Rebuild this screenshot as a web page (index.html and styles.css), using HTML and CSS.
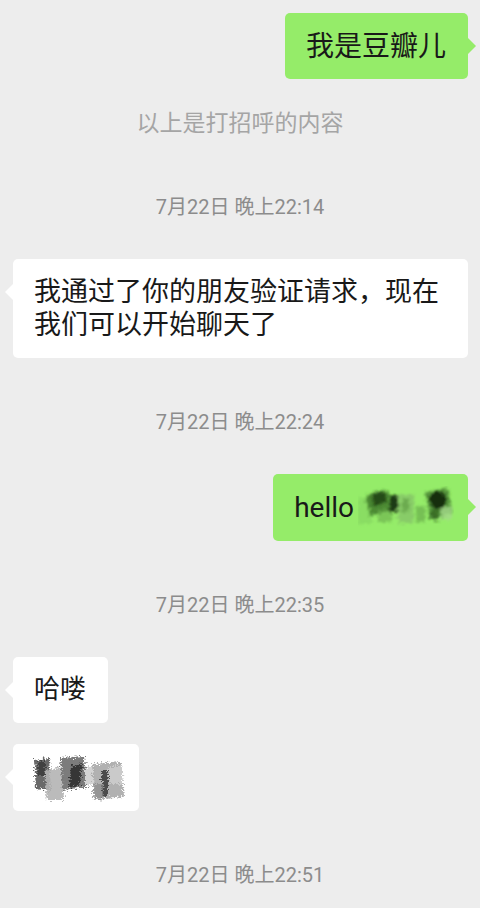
FILE: index.html
```html
<!DOCTYPE html>
<html lang="zh-CN">

<head>
    <meta charset="UTF-8">
    <meta name="viewport" content="width=device-width, initial-scale=1.0">
    <title>聊天</title>
    <link rel="stylesheet" href="styles.css">
</head>

<body>
    <div class="chat">

        <div class="row mine">
            <div class="bubble">我是豆瓣儿</div>
        </div>

        <p class="notice">以上是打招呼的内容</p>

        <p class="time">7月22日 晚上22:14</p>

        <div class="row">
            <div class="bubble wide">我通过了你的朋友验证请求，现在我们可以开始聊天了</div>
        </div>

        <p class="time">7月22日 晚上22:24</p>

        <div class="row mine">
            <div class="bubble scribbled">hello<svg class="scribble" width="96" height="46" viewBox="0 0 96 46">
                    <defs>
                        <filter id="roughGreen" x="-20%" y="-20%" width="140%" height="140%">
                            <feTurbulence type="fractalNoise" baseFrequency="0.5 1.4" numOctaves="3" seed="3" result="noise" />
                            <feDisplacementMap in="SourceGraphic" in2="noise" scale="9" xChannelSelector="R" yChannelSelector="G" />
                            <feGaussianBlur stdDeviation="0.8" />
                        </filter>
                    </defs>
                    <g filter="url(#roughGreen)">
                        <rect x="0" y="12" width="14" height="26" fill="#7cc95a" opacity="0.45" />
                        <polygon points="8,10 30,4 35,24 12,30" fill="#3e7a29" opacity="0.85" />
                        <polygon points="13,7 27,5 29,16 16,20" fill="#1f4214" opacity="0.85" />
                        <rect x="20" y="24" width="14" height="12" fill="#6aae4c" opacity="0.6" />
                        <rect x="32" y="9" width="8" height="17" fill="#1c3a12" />
                        <rect x="40" y="9" width="16" height="28" fill="#86c468" opacity="0.8" />
                        <rect x="44" y="13" width="7" height="13" fill="#5f9c46" opacity="0.7" />
                        <rect x="58" y="20" width="9" height="16" fill="#5d9a45" opacity="0.55" />
                        <polygon points="67,6 90,2 95,27 73,34" fill="#4d8a36" opacity="0.85" />
                        <ellipse cx="80" cy="14" rx="9" ry="9" fill="#142d0c" />
                        <rect x="72" y="24" width="8" height="10" fill="#2e5d1f" opacity="0.7" />
                        <rect x="83" y="21" width="11" height="13" fill="#a4da8a" opacity="0.8" />
                    </g>
                </svg></div>
        </div>

        <p class="time">7月22日 晚上22:35</p>

        <div class="row">
            <div class="bubble">哈喽</div>
        </div>

        <div class="row">
            <div class="bubble scribbled"><svg class="scribble" width="92" height="48" viewBox="0 0 92 48">
                    <defs>
                        <filter id="roughGrey" x="-20%" y="-20%" width="140%" height="140%">
                            <feTurbulence type="fractalNoise" baseFrequency="0.5 1.4" numOctaves="3" seed="7" result="noise" />
                            <feDisplacementMap in="SourceGraphic" in2="noise" scale="9" xChannelSelector="R" yChannelSelector="G" />
                            <feGaussianBlur stdDeviation="0.7" />
                        </filter>
                    </defs>
                    <g filter="url(#roughGrey)">
                        <polygon points="1,6 16,4 18,37 3,35" fill="#5a5a5a" opacity="0.9" />
                        <polygon points="11,17 29,13 31,46 14,46" fill="#b4b4b4" opacity="0.9" />
                        <rect x="5" y="7" width="7" height="15" fill="#303030" opacity="0.7" />
                        <polygon points="27,4 51,2 54,33 30,36" fill="#6e6e6e" opacity="0.9" />
                        <polygon points="38,12 49,9 47,31 36,34" fill="#262626" opacity="0.8" />
                        <rect x="52" y="13" width="9" height="18" fill="#d4d4d4" />
                        <polygon points="59,10 88,8 91,43 62,46" fill="#a8a8a8" opacity="0.9" />
                        <rect x="69" y="16" width="6" height="26" fill="#3a3a3a" opacity="0.85" />
                        <rect x="76" y="12" width="13" height="18" fill="#cacaca" />
                        <rect x="60" y="30" width="10" height="14" fill="#8a8a8a" opacity="0.7" />
                    </g>
                </svg></div>
        </div>

        <p class="time">7月22日 晚上22:51</p>

    </div>
</body>

</html>
```

FILE: styles.css
```css
* {
    box-sizing: border-box;
}

body {
    margin: 0;
    background-color: #ededed;
    font-family: Roboto, "Noto Sans CJK SC", sans-serif;
    color: #191919;
}

.chat {
    display: flex;
    flex-direction: column;
    padding: 13px 0 0 0;
}

.row {
    display: flex;
    justify-content: flex-start;
    padding: 0 12px 0 13px;
}

.row + .row {
    margin-top: 21px;
}

.row.mine {
    justify-content: flex-end;
}

.bubble {
    position: relative;
    padding: 16.5px 22px 16.5px 21px;
    background-color: #ffffff;
    border-radius: 5px;
    font-size: 26px;
    line-height: 33px;
}

/* little arrow on the side of the bubble */
.bubble::before {
    content: "";
    position: absolute;
    top: 25px;
    left: -8px;
    border-style: solid;
    border-width: 8px 8px 8px 0;
    border-color: transparent #ffffff transparent transparent;
}

.mine .bubble {
    background-color: #95ec69;
    font-size: 28px;
}

.mine .bubble::before {
    left: auto;
    right: -8px;
    border-width: 8px 0 8px 8px;
    border-color: transparent transparent transparent #95ec69;
}

.bubble.wide {
    max-width: 458px;
    font-size: 27px;
}

.bubble.scribbled {
    padding-right: 14px;
}

.scribble {
    display: inline-block;
    vertical-align: middle;
    margin: -8px 0;
}

.mine .scribble {
    margin-left: 4px;
}

.row:not(.mine) .scribble {
    margin-left: -1px;
}

.notice {
    margin: 30px 0 4px 0;
    text-align: center;
    font-size: 23px;
    line-height: 30px;
    color: #a5a5a5;
}

.time {
    margin: 50px 0 38px 0;
    text-align: center;
    font-size: 20px;
    line-height: 28px;
    color: #8c8c8c;
}
```
